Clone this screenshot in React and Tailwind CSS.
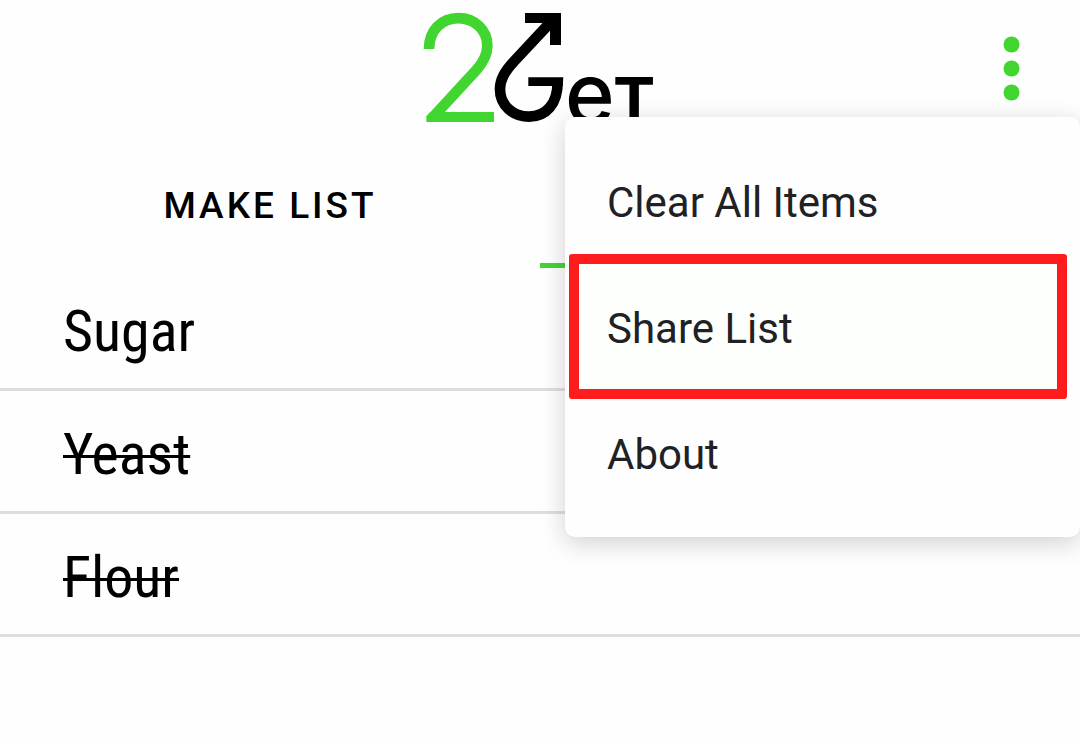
import React from "react";

const items = [
  { name: "Sugar", done: false },
  { name: "Yeast", done: true },
  { name: "Flour", done: true },
];

const actions = [
  { label: "Clear All Items" },
  { label: "Share List", highlighted: true },
  { label: "About" },
];

function Logo() {
  return (
    <svg viewBox="39 36 702 336" className="h-28 w-[234px]" role="img" aria-label="2Get">
      <g fill="none" strokeWidth="32">
        <path
          stroke="#41d52f"
          d="M57 147C57 91 95 54.500 145 54.500C195 54.500 232 91 232 137C232 164 219 187 200 209L71 349"
        />
        <path stroke="#000" d="M428 60L312 184C284 215 270 238 270 268C270 315 308 350 357 350C408 350 443 312 443 245" />
      </g>
      <path fill="#41d52f" d="M49 349L60 337L90 336H252V366H49Z" />
      <path fill="#000" d="M345 39H453V135H420V90L398 69H345Z" />
      <path fill="#000" d="M355 232H460L458 258H355Z" />
      <text x="465" y="371" fontSize="254" className="font-[Inter,sans-serif] font-medium">
        e
      </text>
      <text x="609" y="370" fontSize="190" className="font-[Inter,sans-serif] font-bold">
        T
      </text>
    </svg>
  );
}

function OverflowMenu() {
  return (
    <div
      role="menu"
      className="absolute top-[117px] right-0 w-[515px] rounded-[10px] bg-[#fefefe] pt-[23px] pb-[19px] shadow-[0_6px_24px_rgba(40,20,50,0.20)]"
    >
      {actions.map(({ label, highlighted }) => (
        <button
          key={label}
          type="button"
          role="menuitem"
          className="relative flex h-[126px] w-full items-center px-[42px] text-left text-[42px] leading-[48px] text-[#212124]"
        >
          {highlighted && (
            <span className="absolute -top-3 right-[13px] -bottom-[7px] left-1 rounded-[3px] border-10 border-[#ff1c1c] bg-[#fdfffd]" />
          )}
          <span className="relative">{label}</span>
        </button>
      ))}
    </div>
  );
}

export default function App() {
  return (
    <div className="relative min-h-screen bg-[#fefefe] font-[Roboto,sans-serif] text-black">
      <header className="grid h-36 grid-cols-[1fr_auto_1fr] items-start pt-3">
        <span />
        <Logo />
        <button type="button" aria-label="More options" className="mt-6 mr-[60px] justify-self-end">
          <svg viewBox="0 0 17 66" className="h-[66px] w-[17px]" fill="#41d52f">
            <circle cx="8.500" cy="8.500" r="8" />
            <circle cx="8.500" cy="32.500" r="8" />
            <circle cx="8.500" cy="56.500" r="8" />
          </svg>
        </button>
      </header>

      <div role="tablist" className="grid h-[124px] grid-cols-2 text-[37px] font-medium tracking-[3px]">
        <button type="button" role="tab" aria-selected="false">
          MAKE LIST
        </button>
        <button
          type="button"
          role="tab"
          aria-selected="true"
          aria-label="Shop"
          className="border-b-5 border-[#41d52f]"
        />
      </div>

      <ul className="font-['Roboto_Condensed','Liberation_Sans_Narrow',Roboto,sans-serif] text-[58px] leading-[68px]">
        {items.map(({ name, done }) => (
          <li key={name} className="flex h-[123px] items-center border-b-3 border-[#dedede] px-[63px] pt-1.5">
            {done ? <s className="decoration-3">{name}</s> : <span>{name}</span>}
          </li>
        ))}
      </ul>

      <OverflowMenu />
    </div>
  );
}
